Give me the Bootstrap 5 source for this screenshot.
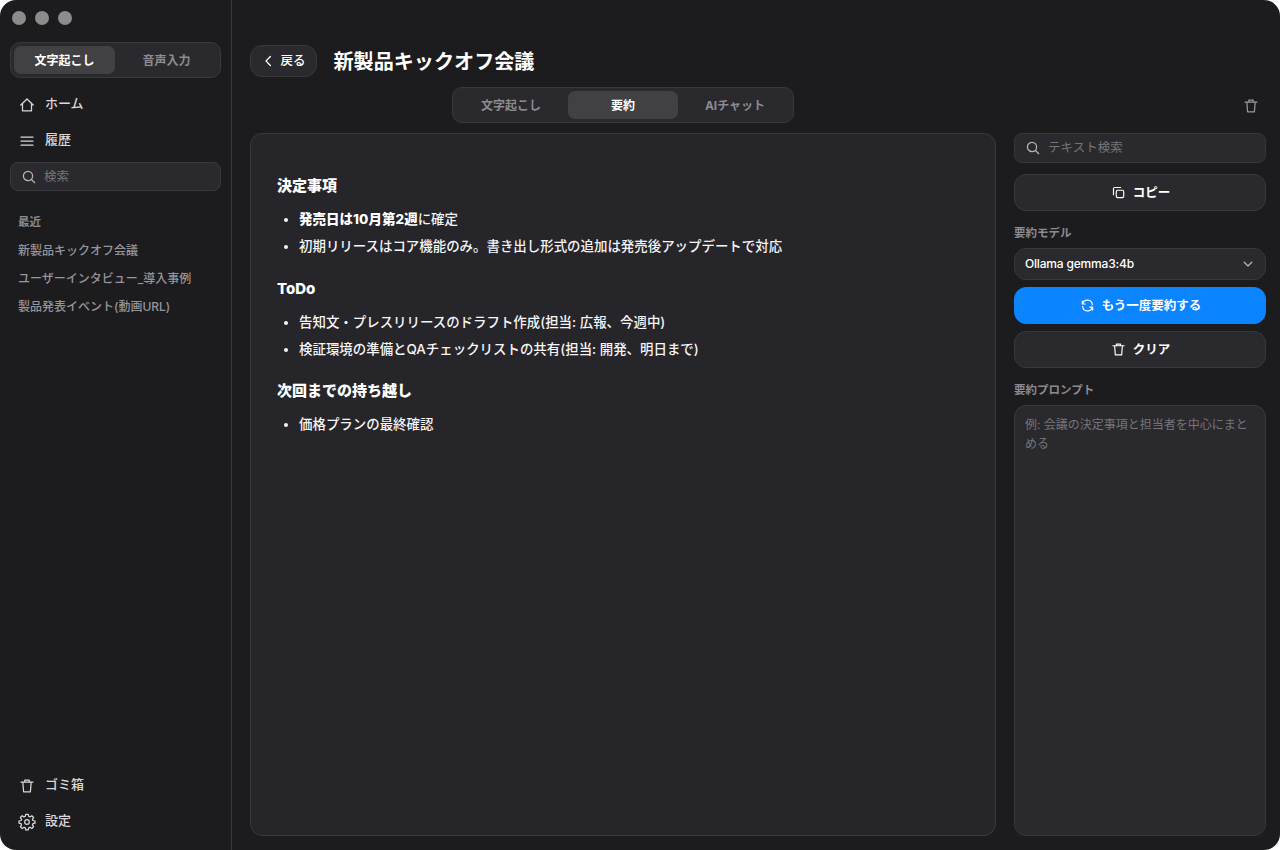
<!DOCTYPE html>
<html lang="ja">
<head>
<meta charset="utf-8">
<meta name="viewport" content="width=device-width, initial-scale=1">
<title>新製品キックオフ会議</title>
<link href="https://cdn.jsdelivr.net/npm/bootstrap@5.3.0/dist/css/bootstrap.min.css" rel="stylesheet">
<style>
  :root { --edge:#39393c; --field:#2a292e; }
  body { background:#fff; font-family:Inter,"Noto Sans CJK JP",sans-serif; color:#fff; font-size:12px; line-height:18px; }
  svg { fill:none; stroke:currentColor; stroke-width:1.25; stroke-linecap:round; stroke-linejoin:round; flex:none; display:block; }
  .window { width:1280px; height:850px; background:#1c1c1e; border-radius:16px; }
  .side { width:232px; border-right:1px solid #38383a; padding:0 10px 12px; }
  .lights { height:42px; padding:11px 0 0 2px; gap:9px; }
  .lights i { width:14px; height:14px; border-radius:50%; background:#8c8c8c; }
  .seg { background:var(--field); border:1px solid var(--edge); border-radius:10px; padding:3px; height:36px; }
  .seg button { border:0; background:none; color:#8b8a90; font-weight:700; border-radius:7px; padding:2px 0 0; height:28px; }
  .main-tabs button { padding-top:1px; }
  .seg button.on { background:#414143; color:#fff; }
  .side-link { height:36px; padding-left:8px; gap:9px; color:#d8d8da; font-size:13px; font-weight:500; text-decoration:none; }
  .side-link svg { margin-top:3px; }
  .side-menu { padding-top:7px; }
  .field { background:var(--field); border:1px solid var(--edge); border-radius:8px; color:#757579; font-size:12.5px; }
  .field svg { color:#b5b5b8; }
  .field input { background:none; border:0; outline:0; color:#fff; min-width:0; padding:0; }
  .field input::placeholder, .prompt::placeholder { color:#757579; opacity:1; }
  .search { height:30px; padding:0 10px; gap:7px; }
  .side .search { height:29px; padding-left:9.5px; gap:7.5px; margin-top:5px; }
  .caption { color:#8b8a90; font-size:11.5px; font-weight:700; line-height:18px; }
  .tools .caption { margin:13px 0 6px; }
  .recent { padding-top:6px; }
  .recent a { color:#96959b; text-decoration:none; font-weight:500; height:28px; line-height:28px; display:block; white-space:nowrap; }
  .act { height:37px; border:1px solid var(--edge); background:var(--field); color:#fff; border-radius:12px; font-size:12.5px; font-weight:700; gap:8px; padding:0 0 0 2px; }
  .act.blue { background:#0a84ff; border-color:#0a84ff; }
  .head-row { height:32px; }
  .back { width:67px; height:32px; font-weight:500; gap:7px; }
  .title { font-size:20.1px; font-weight:700; line-height:32px; padding-top:1px; margin-left:16.5px; }
  .doc { width:746px; background:#26252a; border:1px solid var(--edge); border-radius:12px; padding:38px 26px; }
  .doc h2 { font-size:15px; line-height:28px; font-weight:800; margin:0 0 6px; }
  .doc ul { padding-left:22px; margin:0 0 14.5px; font-size:13.45px; line-height:27px; color:#f5f5f7; font-weight:500; }
  .doc strong { font-weight:800; color:#fff; letter-spacing:.08px; }
  .doc li::marker { font-size:13px; }
  .tools { width:252px; }
  .model { height:32px; border-radius:12px; color:#fff; font-size:12px; font-weight:500; letter-spacing:-.18px; padding:0 12px 0 10px; }
  .prompt { resize:none; outline:0; padding:9px 10px; font-size:12px; line-height:19px; border-radius:12px; color:#fff; }
</style>
</head>
<body>
<div class="window d-flex overflow-hidden">
  <aside class="side d-flex flex-column flex-shrink-0">
    <div class="lights d-flex"><i></i><i></i><i></i></div>
    <div class="seg d-flex" style="gap:1px">
      <button class="on w-50">文字起こし</button>
      <button class="w-50">音声入力</button>
    </div>
    <nav class="side-menu d-flex flex-column">
      <a class="side-link d-flex align-items-center" href="#"><svg width="18" height="18" viewBox="0 0 18 18"><path d="M2.8 9 9 3l6.2 6M4.5 7.8v7h9v-7"/></svg>ホーム</a>
      <a class="side-link d-flex align-items-center" href="#"><svg width="18" height="18" viewBox="0 0 18 18"><path d="M3 5h12M3 9h12M3 13h12"/></svg>履歴</a>
    </nav>
    <label class="field search d-flex align-items-center">
      <svg width="16" height="16" viewBox="0 0 16 16"><circle cx="7" cy="7" r="4.6"/><path d="m10.5 10.5 3.2 3.2"/></svg>
      <input class="w-100" placeholder="検索">
    </label>
    <div class="caption px-2" style="margin-top:22px">最近</div>
    <div class="recent px-2">
      <a href="#">新製品キックオフ会議</a>
      <a href="#">ユーザーインタビュー_導入事例</a>
      <a href="#">製品発表イベント(動画URL)</a>
    </div>
    <nav class="d-flex flex-column mt-auto">
      <a class="side-link d-flex align-items-center" href="#"><svg width="18" height="18" viewBox="0 0 18 18"><path d="M3 5h12M6.8 4.8V3.2h4.4v1.6M4.8 5l.8 9.8h6.8l.8-9.8"/></svg>ゴミ箱</a>
      <a class="side-link d-flex align-items-center" href="#"><svg width="18" height="18" viewBox="0 0 18 18"><path d="M7.7 1.3h2.6l.4 2 1.3.6 1.8-1.2 1.8 1.8-1.2 1.8.5 1.2 2.1.5v2.2l-2.1.5-.5 1.2 1.2 1.8-1.8 1.8-1.8-1.2-1.3.6-.4 2H7.7l-.4-2-1.3-.6-1.8 1.2-1.8-1.8 1.2-1.8-.5-1.2-2.1-.5V8l2.1-.5.5-1.2-1.2-1.8 1.8-1.8L6 3.9l1.3-.6z"/><circle cx="9" cy="9" r="2.3"/></svg>設定</a>
    </nav>
  </aside>

  <main class="d-flex flex-column flex-grow-1" style="padding:45px 14px 14px 18px">
    <header class="head-row d-flex align-items-start">
      <button class="act back d-flex align-items-center justify-content-center"><svg width="10" height="14" viewBox="0 0 10 14"><path d="M7.4 2.5 3 7l4.4 4.5"/></svg>戻る</button>
      <h1 class="title mb-0">新製品キックオフ会議</h1>
    </header>
    <div class="d-flex justify-content-between align-items-center" style="margin:10px 0;padding:0 6px 0 202px">
      <div class="seg main-tabs d-flex" style="width:342px;gap:2px">
        <button class="w-50">文字起こし</button>
        <button class="on w-50">要約</button>
        <button class="w-50">AIチャット</button>
      </div>
      <svg width="18" height="18" viewBox="0 0 18 18" style="color:#98989d;margin-top:1px"><path d="M3 5h12M6.8 4.8V3.2h4.4v1.6M4.8 5l.8 9.8h6.8l.8-9.8"/></svg>
    </div>
    <div class="d-flex flex-grow-1 justify-content-between">
      <article class="doc">
        <h2>決定事項</h2>
        <ul>
          <li><strong>発売日は10月第2週</strong>に確定</li>
          <li>初期リリースはコア機能のみ。書き出し形式の追加は発売後アップデートで対応</li>
        </ul>
        <h2>ToDo</h2>
        <ul>
          <li>告知文・プレスリリースのドラフト作成(担当: 広報、今週中)</li>
          <li>検証環境の準備とQAチェックリストの共有(担当: 開発、明日まで)</li>
        </ul>
        <h2>次回までの持ち越し</h2>
        <ul><li>価格プランの最終確認</li></ul>
      </article>
      <section class="tools d-flex flex-column">
        <label class="field search d-flex align-items-center">
          <svg width="16" height="16" viewBox="0 0 16 16"><circle cx="7" cy="7" r="4.6"/><path d="m10.5 10.5 3.2 3.2"/></svg>
          <input class="w-100" placeholder="テキスト検索">
        </label>
        <button class="act d-flex align-items-center justify-content-center" style="margin-top:11px"><svg width="13" height="13" viewBox="0 0 14 14"><rect x="4.6" y="4.6" width="8" height="8" rx="1.5"/><path d="M1.6 9.3V3.1a1.5 1.5 0 0 1 1.5-1.5h6.2"/></svg>コピー</button>
        <div class="caption">要約モデル</div>
        <div class="field model d-flex align-items-center justify-content-between"><span>Ollama gemma3:4b</span><svg width="10" height="10" viewBox="0 0 10 10"><path d="m1.2 3.2 3.8 3.8 3.8-3.8"/></svg></div>
        <button class="act blue d-flex align-items-center justify-content-center" style="margin-top:7px"><svg width="13" height="13" viewBox="0 0 14 14"><path d="M1.4 2.2v3.2h3.1M1.8 5.2A5.3 5.3 0 0 1 12.2 6M12.6 11.9V8.7H9.5M12.2 8.9A5.3 5.3 0 0 1 1.8 8"/></svg>もう一度要約する</button>
        <button class="act d-flex align-items-center justify-content-center" style="margin-top:7px"><svg width="13" height="13" viewBox="2 2 14 14"><path d="M3 5h12M6.8 4.8V3.2h4.4v1.6M4.8 5l.8 9.8h6.8l.8-9.8"/></svg>クリア</button>
        <div class="caption">要約プロンプト</div>
        <textarea class="field prompt flex-grow-1" placeholder="例: 会議の決定事項と担当者を中心にまとめる"></textarea>
      </section>
    </div>
  </main>
</div>
<script src="https://cdn.jsdelivr.net/npm/bootstrap@5.3.0/dist/js/bootstrap.bundle.min.js"></script>
</body>
</html>
